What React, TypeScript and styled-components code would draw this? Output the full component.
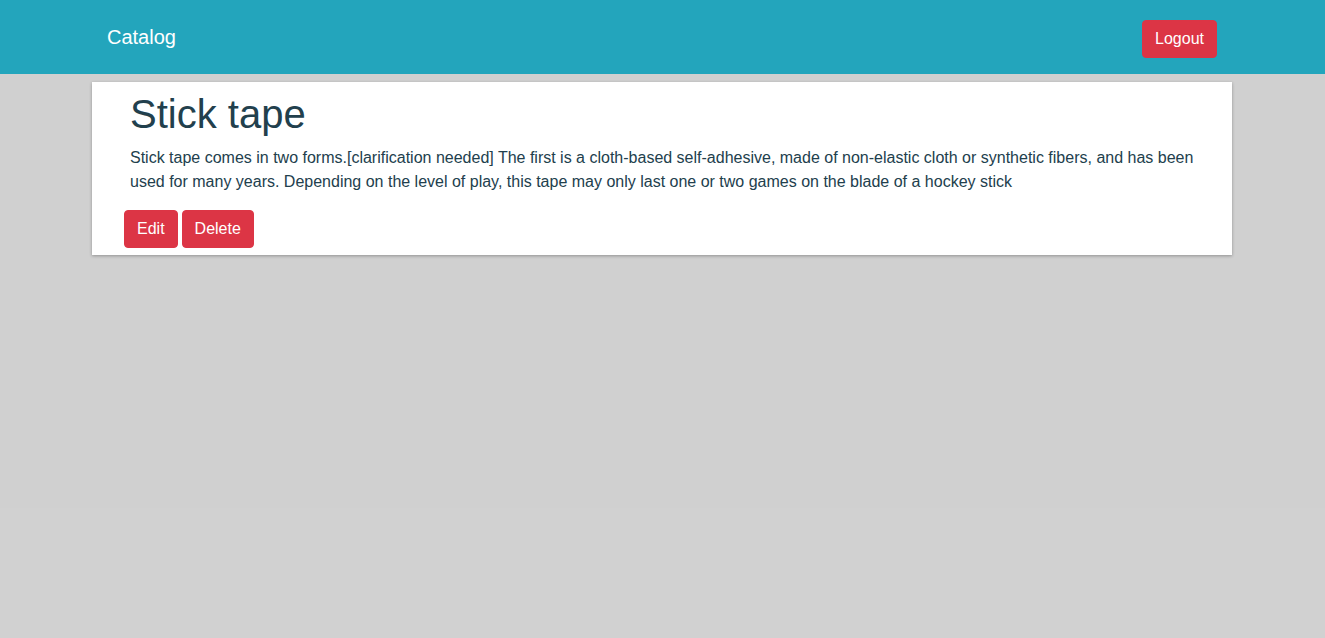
import React from "react";
import styled, { createGlobalStyle } from "styled-components";

const Global = createGlobalStyle`
  html, body { margin: 0; padding: 0; background: #d1d1d1; }
  body { font-family: "Liberation Sans", Arial, Helvetica, sans-serif; }
  * { box-sizing: border-box; }
`;

const Page = styled.div`
  min-height: 508px;
  background: #d0d0d0;
`;

const NavBar = styled.nav`
  background: #23a5bc;
  height: 74px;
  padding-right: 1px;
`;

const Container = styled.div`
  width: 1140px;
  margin: 0 auto;
  padding: 0 15px;
`;

const NavInner = styled(Container)`
  height: 100%;
  display: flex;
  justify-content: space-between;
  align-items: flex-start;
  padding-top: 20px;
`;

const Brand = styled.a`
  color: #ffffff;
  font-size: 20px;
  line-height: 30px;
  margin-top: 2px;
  text-decoration: none;
`;

const Button = styled.button`
  font-family: "Liberation Sans", Arial, sans-serif;
  font-size: 16px;
  line-height: 24px;
  padding: 6px 12px;
  border: 1px solid #dc3545;
  border-radius: 4px;
  background: #dc3545;
  color: #ffffff;
  cursor: pointer;
`;

const Main = styled.main`
  padding-right: 1px;
`;

const Card = styled.div`
  width: 1140px;
  margin: 8px auto 0;
  background: #ffffff;
  box-shadow: 0 1px 3px rgba(0, 0, 0, 0.3);
  padding: 8px 32px 7px;
`;

const Title = styled.h1`
  margin: 0 0 8px 6px;
  font-size: 40px;
  line-height: 48px;
  font-weight: 400;
  color: #22404d;
`;

const Body = styled.p`
  margin: 0 0 16px 6px;
  font-size: 16px;
  line-height: 24px;
  color: #22404d;
`;

const Actions = styled.div`
  display: flex;
  gap: 4px;
`;

export default function App() {
  return (
    <>
      <Global />
      <Page>
        <NavBar>
          <NavInner>
            <Brand href="#">Catalog</Brand>
            <Button>Logout</Button>
          </NavInner>
        </NavBar>
        <Main>
          <Card>
            <Title>Stick tape</Title>
            <Body>
              Stick tape comes in two forms.[clarification needed] The first is a cloth-based self-adhesive, made of
              non-elastic cloth or synthetic fibers, and has been used for many years. Depending on the level of play,
              this tape may only last one or two games on the blade of a hockey stick
            </Body>
            <Actions>
              <Button>Edit</Button>
              <Button>Delete</Button>
            </Actions>
          </Card>
        </Main>
      </Page>
    </>
  );
}
